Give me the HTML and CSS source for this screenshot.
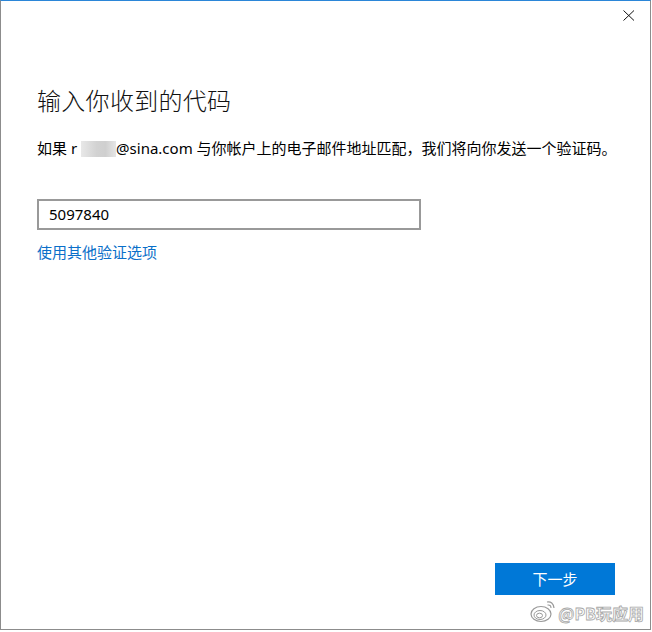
FILE: index.html
```html
<!DOCTYPE html>
<html lang="zh-CN">
<head>
<meta charset="utf-8">
<title>输入你收到的代码</title>
<link rel="stylesheet" href="styles.css">
</head>
<body>
<div class="window">
  <div class="titlebar">
    <svg class="close" width="12" height="11" viewBox="0 0 12 11" aria-label="关闭">
      <path d="M0.5 0.5 L11 10.5 M11 0.5 L0.5 10.5" stroke="#111" stroke-width="1" fill="none"/>
    </svg>
  </div>
  <div class="content">
    <h1 class="title">输入你收到的代码</h1>
    <p class="desc">如果 r<span class="blur"></span>@sina.com 与你帐户上的电子邮件地址匹配，我们将向你发送一个验证码。</p>
    <div class="field">5097840</div>
    <a class="link">使用其他验证选项</a>
  </div>
  <div class="footer">
    <button class="primary">下一步</button>
  </div>
  <div class="watermark">
    <svg class="wb-logo" width="26" height="24" viewBox="0 0 26 24">
      <ellipse cx="11" cy="15" rx="10" ry="7.5" fill="#fff" stroke="#9a9a9a" stroke-width="1.2"/>
      <ellipse cx="10" cy="16" rx="6" ry="4.5" fill="none" stroke="#9a9a9a" stroke-width="1"/>
      <ellipse cx="9.5" cy="16.5" rx="3" ry="2.3" fill="none" stroke="#9a9a9a" stroke-width="1"/>
      <path d="M17 3 Q23 2 24 9" fill="none" stroke="#9a9a9a" stroke-width="1.2"/>
      <path d="M17.5 6 Q21 5.5 21 9" fill="none" stroke="#9a9a9a" stroke-width="1.1"/>
    </svg>
    <span class="wb-text">@PB玩应用</span>
  </div>
</div>
</body>
</html>
```

FILE: styles.css
```css
html, body {
  margin: 0;
  padding: 0;
  background: #ffffff;
}

body {
  width: 652px;
  height: 632px;
  font-family: "Noto Sans", "Noto Sans CJK SC", sans-serif;
  color: #000;
}

.window {
  position: relative;
  box-sizing: border-box;
  width: 651px;
  height: 630px;
  border-top: 1px solid #2b86d8;
  border-left: 1px solid #8c8c8c;
  border-right: 1px solid #8c8c8c;
  border-bottom: 1px solid #8c8c8c;
  background: #fff;
  display: flex;
  flex-direction: column;
}

.titlebar {
  height: 83px;
  display: flex;
  justify-content: flex-end;
  align-items: flex-start;
  padding: 9px 15px 0 0;
  box-sizing: border-box;
}

.close {
  display: block;
}

.content {
  flex: 1;
  padding-left: 36px;
  display: flex;
  flex-direction: column;
  align-items: flex-start;
}

.title {
  margin: 0;
  font-family: "Noto Sans CJK SC", sans-serif;
  font-weight: 200;
  font-size: 24px;
  line-height: 32px;
  color: #111;
  letter-spacing: 0.3px;
}

.desc {
  margin: 22px 0 0 0;
  font-size: 15px;
  line-height: 20px;
  color: #000;
  white-space: nowrap;
}

.blur {
  display: inline-block;
  width: 35px;
  height: 16px;
  margin-left: 4px;
  vertical-align: -3px;
  background: linear-gradient(90deg, #e8e8e8 0%, #d2d2d2 45%, #cfcfcf 70%, #e6e6e6 100%);
}

.field {
  margin-top: 41px;
  box-sizing: border-box;
  width: 384px;
  height: 31px;
  border: 2px solid #999;
  padding: 0 10px;
  font-size: 15px;
  line-height: 27px;
  color: #000;
}

.link {
  margin-top: 12px;
  font-size: 15px;
  line-height: 20px;
  color: #0a6fc9;
  cursor: pointer;
}

.footer {
  display: flex;
  justify-content: flex-end;
  padding: 0 35px 34px 0;
}

.primary {
  width: 120px;
  height: 32px;
  border: 0;
  margin: 0;
  background: #0078d7;
  color: #fff;
  font-family: "Noto Sans CJK SC", sans-serif;
  font-size: 15px;
  line-height: 32px;
  padding: 0;
}

.watermark {
  position: absolute;
  right: 6px;
  bottom: 6px;
  display: flex;
  align-items: flex-end;
  gap: 2px;
}

.wb-logo {
  display: block;
}

.wb-text {
  font-family: "Noto Sans CJK SC", sans-serif;
  font-size: 16px;
  line-height: 20px;
  color: #ffffff;
  -webkit-text-stroke: 0.8px #a8a8a8;
  font-weight: 700;
}
```
